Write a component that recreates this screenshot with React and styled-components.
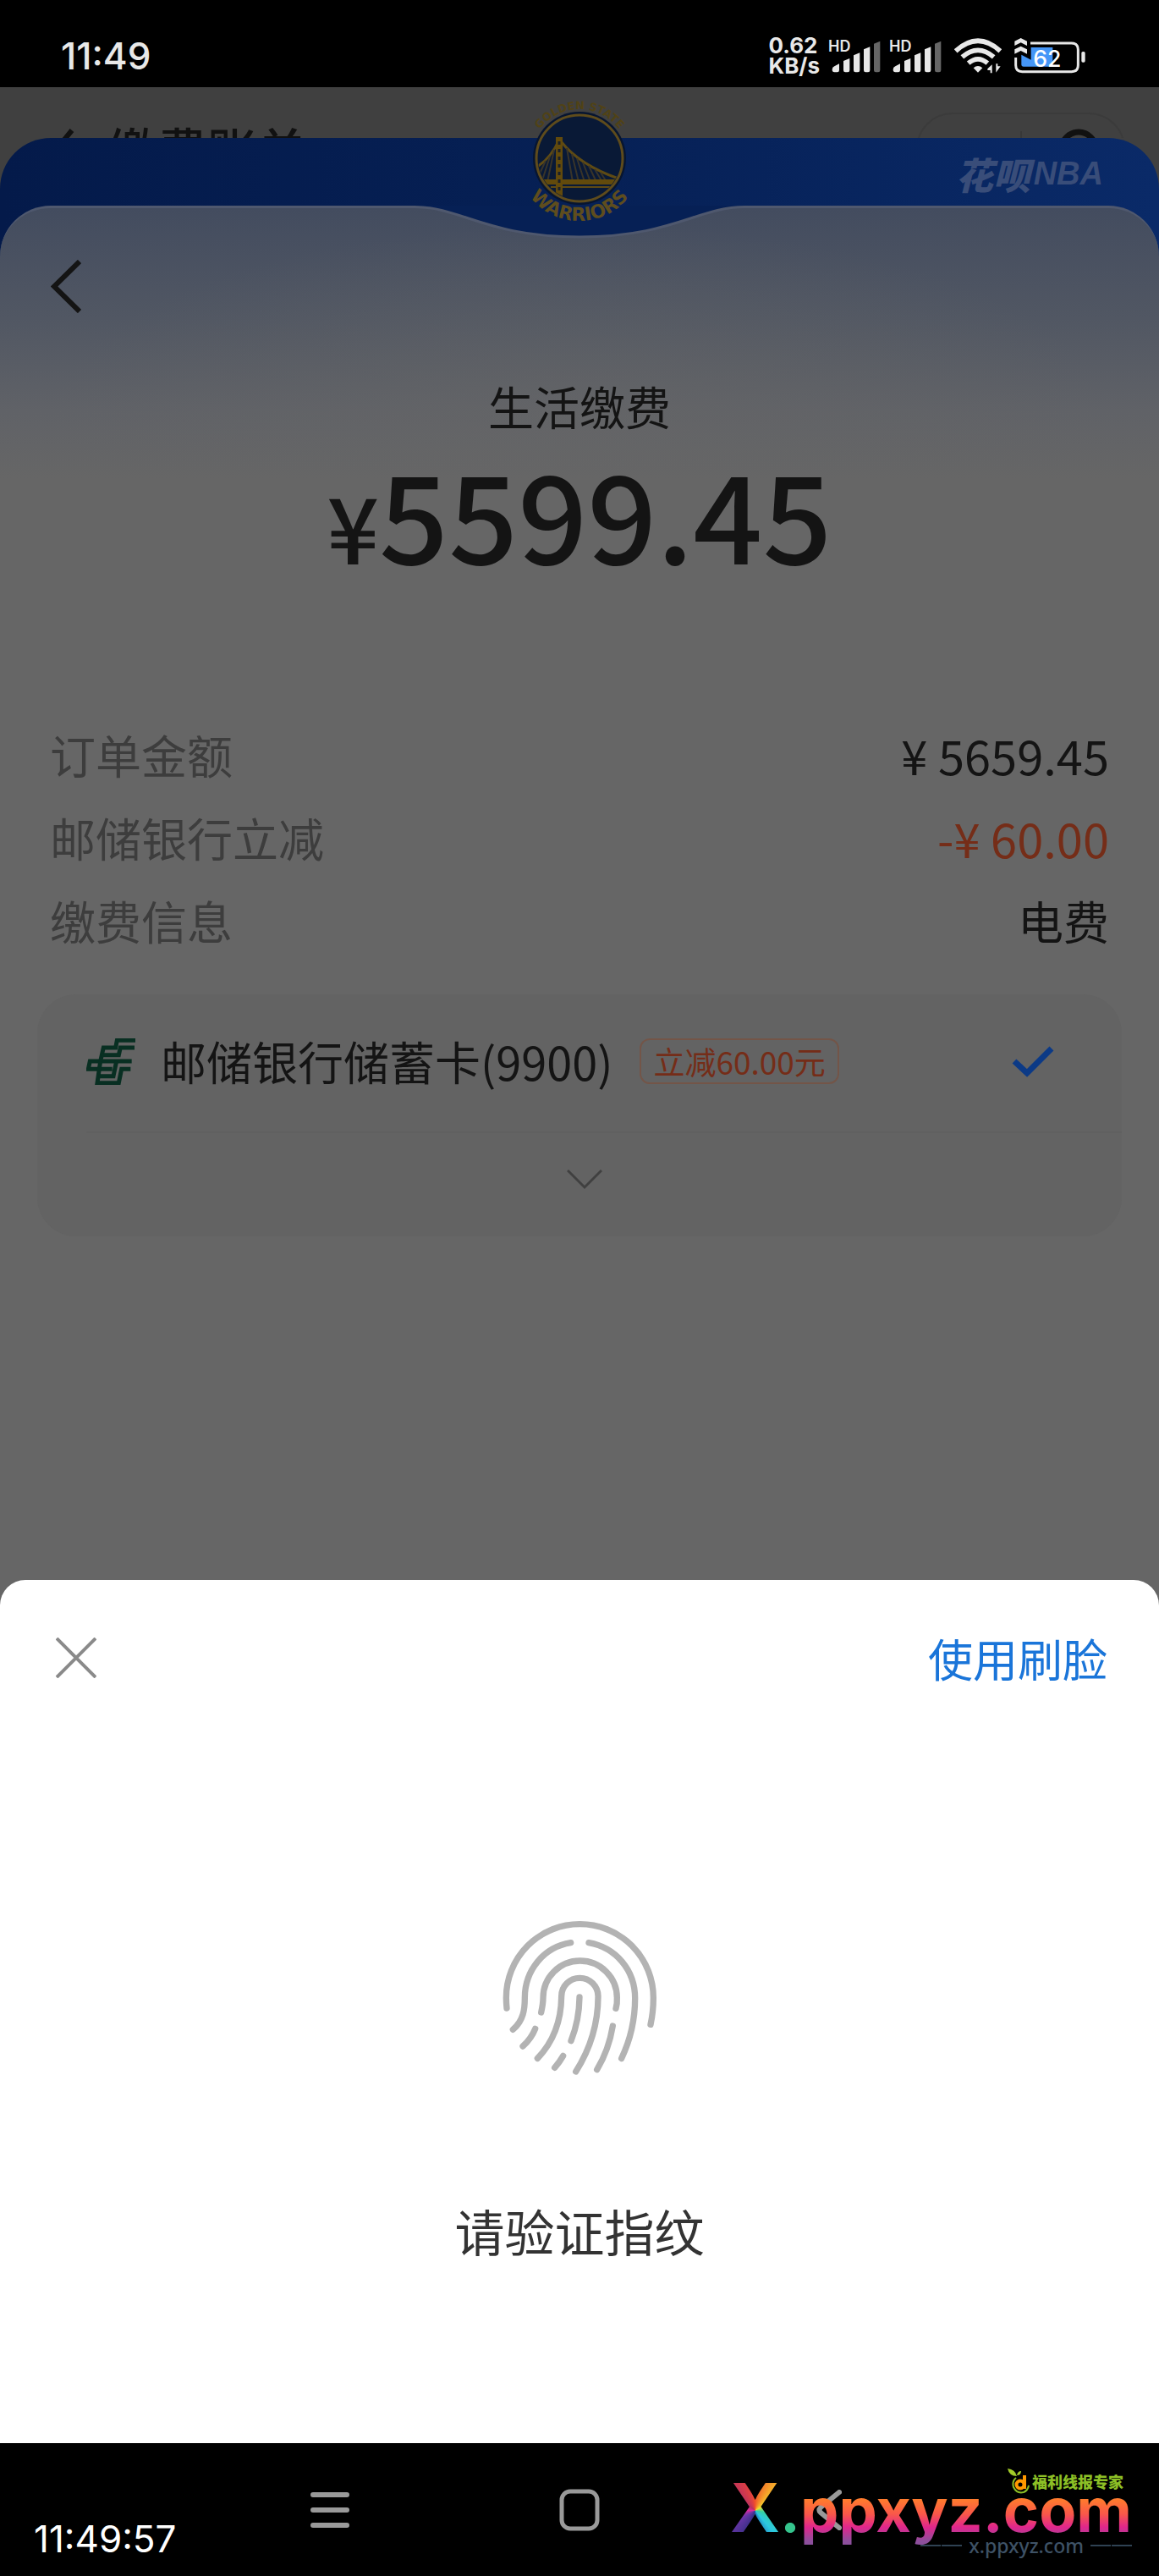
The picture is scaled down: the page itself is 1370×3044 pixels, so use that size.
import React from 'react';
import styled, { createGlobalStyle } from 'styled-components';

const cjk = '"Noto Sans CJK SC", "Noto Sans", sans-serif';
const latin = 'Inter, "Noto Sans CJK SC", sans-serif';

const GlobalStyle = createGlobalStyle`
  * { box-sizing: border-box; }
  body { margin: 0; background: #000; font-family: ${cjk}; }
  button { border: 0; padding: 0; background: none; font: inherit; color: inherit; cursor: pointer; }
  svg { display: block; flex: none; }
  dl, dd, dt, h1, p { margin: 0; font-weight: 400; }
`;

const Screen = styled.div`
  display: flex;
  flex-direction: column;
  min-height: 100vh;
  overflow: hidden;
`;

/* ---------- status bar ---------- */
const StatusBar = styled.header`
  display: flex;
  align-items: center;
  justify-content: space-between;
  height: 103px;
  padding: 28px 87px 0 72px;
  background: #000;
  color: #e8e8e8;
  font-family: ${latin};
`;
const Clock = styled.time`
  font-size: 44px;
  line-height: 48px;
  font-weight: 500;
`;
const StatusIcons = styled.div`
  display: flex;
  align-items: center;
  gap: 10px;
`;
const SignalIcon = styled.svg`
  overflow: visible;
`;
const WifiIcon = styled.svg`
  margin: 0 5px;
`;
const NetSpeed = styled.div`
  font-size: 26px;
  line-height: 24px;
  font-weight: 700;
`;

/* ---------- dimmed page behind ---------- */
const Stage = styled.main`
  position: relative;
  flex: 1;
  display: flex;
  flex-direction: column;
  background: #404040;
`;
const HeaderClip = styled.div`
  height: 60px;
  overflow: hidden;
`;
const BillHeader = styled.div`
  display: flex;
  align-items: center;
  height: 146px;
  padding: 0 40px 0 63px;
  gap: 38px;
  color: #111;
`;
const BillTitle = styled.span`
  font-size: 59px;
  line-height: 60px;
  font-weight: 500;
`;
const Capsule = styled.div`
  display: flex;
  align-items: center;
  justify-content: space-between;
  width: 247px;
  height: 86px;
  margin-left: auto;
  padding: 0 29px;
  border: 2px solid #3b3b3b;
  border-radius: 43px;
`;
const CapsuleLine = styled.span`
  width: 2px;
  height: 42px;
  background: #383838;
`;

/* ---------- payment sheet ---------- */
const PaySheet = styled.section`
  position: relative;
  flex: 1;
  display: flex;
  flex-direction: column;
  border-radius: 60px 60px 0 0;
  background: linear-gradient(90deg, #041a4a 0%, #062055 50%, #0a2a68 100%);
`;
const Banner = styled.div`
  display: flex;
  align-items: center;
  justify-content: flex-end;
  gap: 4px;
  height: 80px;
  padding: 4px 66px 0;
  color: #394d79;
  font-size: 44px;
  line-height: 48px;
  font-weight: 900;
  font-style: italic;
`;
const BannerLatin = styled.span`
  font-family: "Liberation Sans Narrow", "Liberation Sans", sans-serif;
  font-size: 38px;
  font-weight: 700;
`;
const TeamLogo = styled.svg`
  position: absolute;
  top: -57px;
  left: 50%;
  margin-left: -81px;
`;
const Notch = styled.svg`
  position: absolute;
  top: 80px;
  left: 50%;
  margin-left: -200px;
`;
const Panel = styled.div`
  flex: 1;
  display: flex;
  flex-direction: column;
  padding: 61px 44px 60px;
  border-top: 3px solid #4f586e;
  border-radius: 60px 60px 0 0;
  background:
    radial-gradient(ellipse 620px 220px at 50% 240px, rgba(102, 102, 102, 0.5), rgba(102, 102, 102, 0)),
    linear-gradient(180deg, #434c5f 0, #515763 130px, #606267 240px, #666 320px);
`;
const BackButton = styled.button`
  align-self: flex-start;
  margin-left: 16px;
`;
const PayTitle = styled.h1`
  margin-top: 78px;
  text-align: center;
  font-size: 54px;
  line-height: 64px;
  color: #141414;
`;
const Amount = styled.p`
  display: flex;
  align-items: baseline;
  justify-content: center;
  margin-top: 20px;
  font-size: 144px;
  line-height: 144px;
  font-weight: 500;
  color: #141414;
`;
const Currency = styled.span`
  font-size: 108px;
  line-height: 108px;
`;
const Details = styled.dl`
  margin: 167px 15px 38px;
`;
const DetailRow = styled.div`
  display: flex;
  align-items: center;
  justify-content: space-between;
  height: 98px;
  font-size: 54px;
  line-height: 64px;
`;
const DetailLabel = styled.dt`
  color: #3d3d3d;
`;
const DetailValue = styled.dd`
  color: ${(p) => (p.$discount ? '#752d18' : '#141414')};
  font-size: ${(p) => (p.$number ? '56px' : '54px')};
`;
const AccountCard = styled.div`
  border-radius: 46px;
  background: #636363;
  overflow: hidden;
`;
const AccountRow = styled.button`
  display: flex;
  align-items: center;
  width: 100%;
  height: 162px;
  padding: 0 80px 4px 58px;
  font-size: 54px;
  line-height: 64px;
  color: #141414;
`;
const AccountName = styled.span`
  margin: 0 32px 0 30px;
`;
const PromoTag = styled.span`
  padding: 0 14px;
  border: 2px solid #735548;
  border-radius: 12px;
  font-size: 37px;
  line-height: 50px;
  color: #752d18;
`;
const Check = styled.svg`
  margin-left: auto;
`;
const ExpandButton = styled.button`
  display: flex;
  align-items: center;
  justify-content: center;
  width: calc(100% - 58px);
  height: 124px;
  margin-left: 58px;
  padding: 0 46px 14px 0;
  border-top: 2px solid #606060;
`;

/* ---------- fingerprint sheet ---------- */
const VerifySheet = styled.section`
  position: relative;
  display: flex;
  flex-direction: column;
  align-items: center;
  margin-top: -30px;
  padding-bottom: 215px;
  border-radius: 30px 30px 0 0;
  background: #fff;
`;
const VerifyHeader = styled.div`
  display: flex;
  align-items: center;
  justify-content: space-between;
  align-self: stretch;
  height: 184px;
  padding: 0 61px 0 66px;
`;
const FaceLink = styled.a`
  font-size: 53px;
  line-height: 64px;
  color: #1a75d9;
  text-decoration: none;
`;
const Fingerprint = styled.svg`
  margin: 218px 0 148px;
`;
const VerifyHint = styled.p`
  font-size: 59px;
  line-height: 72px;
  color: #333;
`;

/* ---------- navigation bar ---------- */
const NavBar = styled.nav`
  position: relative;
  display: grid;
  grid-template-columns: repeat(3, 295px);
  justify-content: center;
  height: 157px;
  background: #000;
`;
const NavButton = styled.button`
  display: flex;
  align-items: center;
  justify-content: center;
`;
const Timestamp = styled.time`
  position: absolute;
  left: 40px;
  bottom: 20px;
  color: #fff;
  font-family: ${latin};
  font-size: 44px;
  line-height: 48px;
`;
const Watermark = styled.div`
  position: absolute;
  right: 32px;
  bottom: 24px;
  display: flex;
  flex-direction: column;
  align-items: flex-end;
  pointer-events: none;
`;
const SiteTag = styled.div`
  display: flex;
  align-items: center;
  gap: 3px;
  margin: 0 10px -14px 0;
  color: #8cbf26;
  font-size: 18px;
  line-height: 28px;
  font-weight: 900;
`;
const SiteName = styled.div`
  display: flex;
  align-items: baseline;
  font-family: Inter, sans-serif;
  font-size: 72px;
  line-height: 60px;
  font-weight: 700;
`;
const SiteX = styled.span`
  font-size: 80px;
  background: conic-gradient(from 0deg at 50% 56%, #f0522a 0deg, #f5a52a 35deg, #f0e030 60deg, #35d0a0 100deg, #2cc8e0 140deg, #1c6fb5 170deg, #3a2f86 200deg, #6a35a8 240deg, #e02aa0 270deg, #b83060 310deg, #e04040 345deg, #f0522a 360deg);
  background-clip: text;
  -webkit-background-clip: text;
  color: transparent;
`;
const SiteDot = styled.span`
  color: #35c48d;
`;
const SiteRest = styled.span`
  margin-bottom: -16px;
  padding-bottom: 16px;
  background: linear-gradient(180deg, #ff7a2e 24%, #f9574a 46%, #e0268c 66%, #8c4f9c 88%);
  background-clip: text;
  -webkit-background-clip: text;
  color: transparent;
`;
const SiteUrl = styled.div`
  display: flex;
  align-items: center;
  gap: 8px;
  color: #3e5266;
  font-family: "Noto Sans", sans-serif;
  font-size: 23px;
  line-height: 24px;
  font-weight: 500;
`;
const Rule = styled.span`
  width: 49px;
  height: 2px;
  background: linear-gradient(90deg, #2f4253 0 24px, transparent 24px 25px, #2f4253 25px);
`;

function Signal() {
  return (
    <SignalIcon width="62" height="40" viewBox="289 72 186 120" aria-label="信号">
      <text x="289" y="118" fontFamily="Inter, sans-serif" fontSize="54" fontWeight="600" fill="#e8e8e8">HD</text>
      <g fill="#e8e8e8">
        <path d="M303 181 Q303 172 311 169 L328 160 V183 Q328 190 321 190 H311 Q303 190 303 181Z" />
        <path d="M343 150 L365 141 V183 Q365 190 358 190 H350 Q343 190 343 183Z" />
        <path d="M379 130 L401 121 V183 Q401 190 394 190 H386 Q379 190 379 183Z" />
        <path d="M415 109 L437 100 V183 Q437 190 430 190 H422 Q415 190 415 183Z" />
      </g>
      <path fill="#666" d="M451 89 L473 80 V183 Q473 190 466 190 H458 Q451 190 451 183Z" />
    </SignalIcon>
  );
}

function Wifi() {
  return (
    <WifiIcon width="56" height="44" viewBox="738 69 168 132" aria-label="无线网络">
      <g fill="none" stroke="#e8e8e8" strokeWidth="17">
        <path d="M743 118 Q822 46 901 118" />
        <path d="M766 139 Q822 91 878 139" />
        <path d="M788 161 Q822 132 856 161" />
      </g>
      <path d="M806 178 Q822 164 838 178 L822 194Z" fill="#e8e8e8" />
      <path d="M856 181 L872 166 V196 H866 V186 H856Z M886 163 H892 V172 H902 L886 194Z" fill="#e8e8e8" />
    </WifiIcon>
  );
}

function Battery() {
  return (
    <svg width="84" height="44" viewBox="959 62 252 132" aria-label="电量 62%">
      <path d="M1018 98 H1095 V166 H992 Q984 166 984 158 V124 L1018 142Z" fill="#4596f7" />
      <path d="M1016 83 H1162 Q1185 83 1185 106 V161 Q1185 184 1162 184 H987 Q964 184 964 161 V134" fill="none" stroke="#e8e8e8" strokeWidth="9" />
      <path d="M960 76 L982 65 L1004 76 V92 L982 81 L960 92Z M960 105 L982 94 L1004 105 V121 L982 110 L960 121Z" fill="#e8e8e8" />
      <rect x="1197" y="113" width="13" height="38" rx="5" fill="#e8e8e8" />
      <text x="1026" y="166" fontFamily="Inter, sans-serif" fontSize="80" fontWeight="500" fill="#fff">62</text>
    </svg>
  );
}

function WarriorsLogo() {
  return (
    <TeamLogo width="162" height="162" viewBox="-81 -81 162 162" aria-label="Golden State Warriors">
      <defs>
        <path id="arcTop" d="M-58 0 A58 58 0 0 1 58 0" />
        <path id="arcBottom" d="M-74 0 A74 74 0 0 0 74 0" />
        <clipPath id="disc"><circle r="49" /></clipPath>
      </defs>
      <circle r="55" fill="#071530" />
      <circle r="51" fill="#091936" stroke="#5e4b1c" strokeWidth="3" />
      <g clipPath="url(#disc)" fill="none" stroke="#5e4a14">
        <path d="M-24 -22 Q-34 0 -50 10 M-22 -20 Q0 8 46 24" strokeWidth="3" />
        <path d="M-30 -10 L-38 28 M-35 -2 L-44 26 M-40 3 L-48 20 M-15 -12 L-8 28 M-9 -5 L-1 28 M-3 0 L6 28 M4 5 L13 28 M11 9 L20 28 M18 13 L27 28 M25 17 L32 28" strokeWidth="2" stroke="#38342a" />
        <path d="M-46 28 H44" strokeWidth="6" stroke="#624a0c" />
        <path d="M-34 34 H36" strokeWidth="2" />
        <path d="M-24 -25 V50" strokeWidth="8" stroke="#624a0c" />
        <path d="M-24 -20 V46" strokeWidth="3" strokeDasharray="4 5" stroke="#1c2028" />
      </g>
      <text fontFamily="DejaVu Sans, sans-serif" fontWeight="700" fontSize="13" fill="#504216" textAnchor="middle">
        <textPath href="#arcTop" startOffset="50%">GOLDEN STATE</textPath>
      </text>
      <text fontFamily="DejaVu Sans, sans-serif" fontWeight="700" fontSize="22" fill="#5e4d1e" textAnchor="middle">
        <textPath href="#arcBottom" startOffset="50%">WARRIORS</textPath>
      </text>
    </TeamLogo>
  );
}

function BankLogo() {
  return (
    <svg width="58" height="55" viewBox="66 63 174 165" aria-label="邮储银行">
      <g fill="none" stroke="#082f22" strokeWidth="15">
        <path d="M240 70 H175 L170 96 H127 L116 144" />
        <path d="M237 96 H187 L181 122 H118" />
        <path d="M227 144 H79 L73 172 H158" />
        <path d="M223 172 H191 L181 221 H105 L116 144" />
        <path d="M173 144 L162 197 H110" />
      </g>
    </svg>
  );
}

export default function App() {
  return (
    <Screen>
      <GlobalStyle />
      <StatusBar>
        <Clock>11:49</Clock>
        <StatusIcons>
          <NetSpeed>0.62<br />KB/s</NetSpeed>
          <Signal />
          <Signal />
          <Wifi />
          <Battery />
        </StatusIcons>
      </StatusBar>

      <Stage>
        <HeaderClip>
          <BillHeader>
            <svg width="26" height="48" viewBox="0 0 26 48"><path d="M22 2 L4 24 L22 46" fill="none" stroke="#111" strokeWidth="6" /></svg>
            <BillTitle>缴费账单</BillTitle>
            <Capsule>
              <svg width="48" height="48" viewBox="0 0 48 48"><circle cx="24" cy="24" r="6" fill="#111" /></svg>
              <CapsuleLine />
              <svg width="48" height="48" viewBox="0 0 48 48"><circle cx="24" cy="24" r="20" fill="none" stroke="#111" strokeWidth="7" /></svg>
            </Capsule>
          </BillHeader>
        </HeaderClip>

        <PaySheet>
          <Banner>花呗<BannerLatin>NBA</BannerLatin></Banner>
          <Panel>
            <BackButton aria-label="返回">
              <svg width="36" height="63" viewBox="0 0 36 63"><path d="M34 2 L4 31.5 L34 61" fill="none" stroke="#141414" strokeWidth="6" /></svg>
            </BackButton>
            <PayTitle>生活缴费</PayTitle>
            <Amount><Currency>¥</Currency>5599.45</Amount>
            <Details>
              <DetailRow>
                <DetailLabel>订单金额</DetailLabel>
                <DetailValue $number>¥ 5659.45</DetailValue>
              </DetailRow>
              <DetailRow>
                <DetailLabel>邮储银行立减</DetailLabel>
                <DetailValue $number $discount>-¥ 60.00</DetailValue>
              </DetailRow>
              <DetailRow>
                <DetailLabel>缴费信息</DetailLabel>
                <DetailValue>电费</DetailValue>
              </DetailRow>
            </Details>
            <AccountCard>
              <AccountRow>
                <BankLogo />
                <AccountName>邮储银行储蓄卡(9900)</AccountName>
                <PromoTag>立减60.00元</PromoTag>
                <Check width="50" height="38" viewBox="0 0 50 38"><path d="M3 19 L18 33 L47 4" fill="none" stroke="#0c3a86" strokeWidth="7" /></Check>
              </AccountRow>
              <ExpandButton aria-label="展开">
                <svg width="42" height="25" viewBox="0 0 42 25"><path d="M1 2 L21 22 L41 2" fill="none" stroke="#404040" strokeWidth="3" /></svg>
              </ExpandButton>
            </AccountCard>
          </Panel>
          <Notch width="400" height="42" viewBox="0 0 400 42">
            <path d="M5 0 H395 V1 C340 1 310 37 200 37 C90 37 60 1 5 1Z" fill="#062055" />
            <path d="M5 1.5 C60 1.5 90 37 200 37 C310 37 340 1.5 395 1.5" fill="none" stroke="#4f586e" strokeWidth="3" />
          </Notch>
          <WarriorsLogo />
        </PaySheet>
      </Stage>

      <VerifySheet>
        <VerifyHeader>
          <button aria-label="关闭">
            <svg width="48" height="48" viewBox="0 0 48 48"><path d="M1 1 L47 47 M47 1 L1 47" stroke="#8a8a8a" strokeWidth="4" /></svg>
          </button>
          <FaceLink href="#face">使用刷脸</FaceLink>
        </VerifyHeader>
        <Fingerprint width="183" height="183" viewBox="103 115 549 549">
          <g fill="none" stroke="#b3b3b3" strokeWidth="22" strokeLinecap="round">
            <path d="M118 427 Q116 408 116 390 A261 261 0 0 1 638 390 Q638 440 628 485" />
            <path d="M345 195 C250 210 182 292 182 390 C182 430 178 470 140 503" />
            <path d="M409 195 C505 212 573 292 573 392 C573 470 556 540 525 605" />
            <path d="M240 442 C246 415 247 405 247 390 A131 131 0 0 1 509 390 Q510 412 505 428" />
            <path d="M219 500 Q205 535 175 562" />
            <path d="M227 605 C280 550 311 480 312 385 A65 65 0 0 1 442 385 C442 480 415 570 363 652" />
            <path d="M376 388 Q375 470 346 543" />
            <path d="M318 596 Q306 617 288 638" />
            <path d="M494 490 Q480 575 438 645" />
          </g>
        </Fingerprint>
        <VerifyHint>请验证指纹</VerifyHint>
      </VerifySheet>

      <NavBar>
        <NavButton aria-label="最近任务">
          <svg width="46" height="44" viewBox="0 0 46 44"><path d="M3 4 H43 M3 22 H43 M3 40 H43" stroke="#999" strokeWidth="6" strokeLinecap="round" /></svg>
        </NavButton>
        <NavButton aria-label="主页">
          <svg width="48" height="50" viewBox="0 0 48 50"><rect x="3" y="3" width="42" height="44" rx="10" fill="none" stroke="#999" strokeWidth="5" /></svg>
        </NavButton>
        <NavButton aria-label="返回">
          <svg width="30" height="48" viewBox="0 0 30 48"><path d="M27 3 L5 21 Q2 24 5 27 L27 45" fill="none" stroke="#999" strokeWidth="6" strokeLinecap="round" /></svg>
        </NavButton>
        <Timestamp>11:49:57</Timestamp>
        <Watermark>
          <SiteTag>
            <svg width="26" height="30" viewBox="0 0 26 30">
              <path d="M0 0 Q9 1 11 9 Q2 9 0 0Z M11 8 Q12 3 16 3 Q16 8 11 8Z" fill="#a3cc29" />
              <path d="M10 11 Q5 15 7 22 Q11 30 19 28 Q24 26 25 20" fill="none" stroke="#8cbf26" strokeWidth="2" />
              <circle cx="15" cy="19" r="4.5" fill="none" stroke="#f90" strokeWidth="4" />
              <path d="M20 8 V24" stroke="#f90" strokeWidth="4" />
            </svg>
            福利线报专家
          </SiteTag>
          <SiteName><SiteX>X</SiteX><SiteDot>.</SiteDot><SiteRest>ppxyz.com</SiteRest></SiteName>
          <SiteUrl><Rule />x.ppxyz.com<Rule /></SiteUrl>
        </Watermark>
      </NavBar>
    </Screen>
  );
}
